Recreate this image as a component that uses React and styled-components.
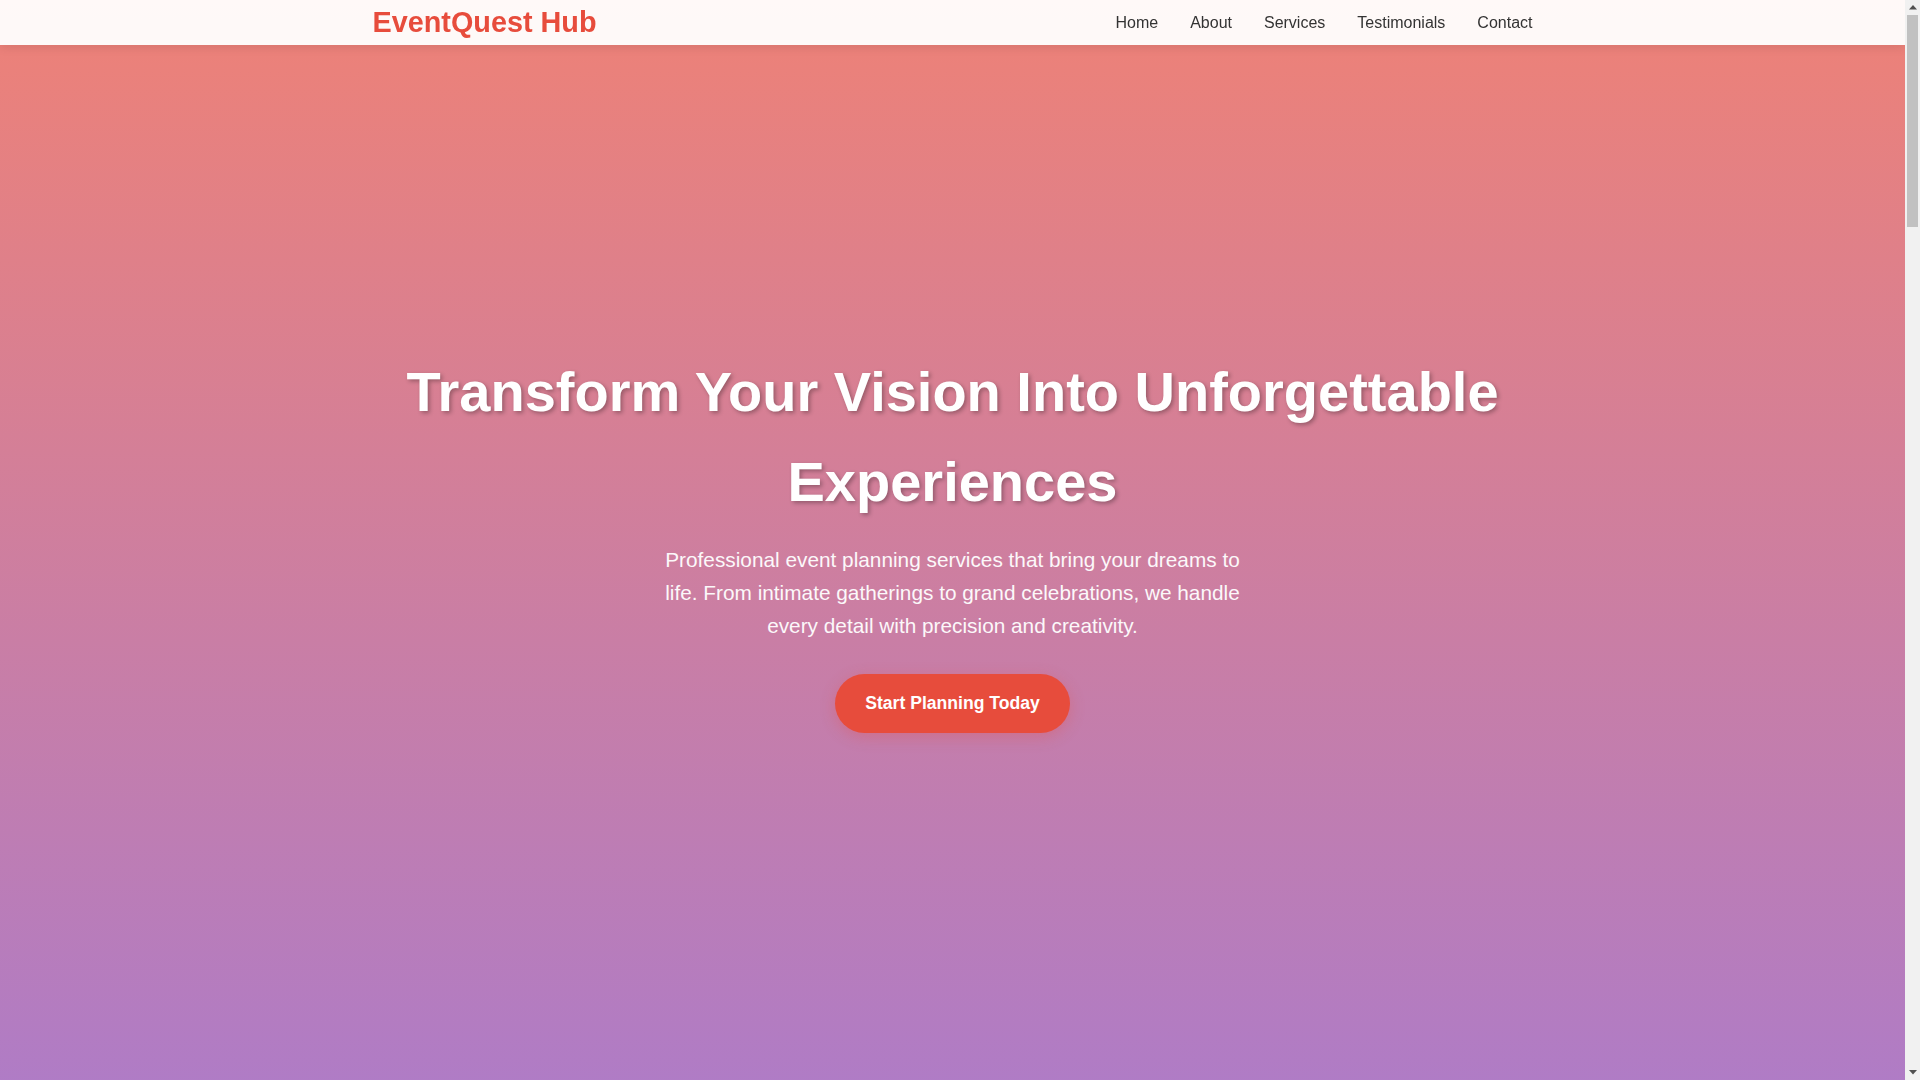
import React from "react";
import styled, { createGlobalStyle } from "styled-components";

const GlobalStyle = createGlobalStyle`
  * { margin: 0; padding: 0; box-sizing: border-box; }
  html { scroll-behavior: smooth; }
  body {
    font-family: "Liberation Sans", Arial, sans-serif;
    line-height: 1.6;
    color: #333;
    background: #fff;
    margin-right: 15px;
  }
`;

/* classic browser scrollbar look, drawn on the right edge */
const ScrollRail = styled.div`
  position: fixed;
  top: 0;
  right: 0;
  width: 15px;
  height: 100vh;
  z-index: 200;
  background: #f1f1f1;
  display: flex;
  flex-direction: column;
  align-items: center;
`;

const RailButton = styled.div`
  width: 15px;
  height: 15px;
  flex: none;
  display: flex;
  align-items: center;
  justify-content: center;
`;

const RailTrack = styled.div`
  flex: 1;
  width: 15px;
  padding: 0 2px;
`;

const RailThumb = styled.div`
  height: 212px;
  background: #c1c1c1;
`;

const Header = styled.header`
  position: fixed;
  top: 0;
  left: 0;
  right: 15px;
  z-index: 100;
  background: rgba(255, 255, 255, 0.95);
  box-shadow: 0 2px 10px rgba(0, 0, 0, 0.1);
`;

const Container = styled.div`
  max-width: 1200px;
  margin: 0 auto;
  padding: 0 20px;
`;

const NavBar = styled(Container)`
  height: 45px;
  display: flex;
  align-items: center;
  justify-content: space-between;
`;

const Logo = styled.a`
  font-size: 1.8rem;
  font-weight: bold;
  color: #e74c3c;
  text-decoration: none;
`;

const NavLinks = styled.ul`
  display: flex;
  list-style: none;
  gap: 2rem;
`;

const NavLink = styled.a`
  color: #333;
  text-decoration: none;
  font-size: 16px;
`;

const Hero = styled.section`
  height: 100vh;
  display: flex;
  align-items: center;
  justify-content: center;
  text-align: center;
  color: #fff;
  background: linear-gradient(rgba(231, 76, 60, 0.7), rgba(142, 68, 173, 0.7));
`;

const HeroInner = styled(Container)`
  display: flex;
  flex-direction: column;
  align-items: center;
`;

const Title = styled.h1`
  font-size: 3.5rem;
  font-weight: bold;
  line-height: 1.6;
  margin-bottom: 1rem;
  text-shadow: 2px 2px 4px rgba(0, 0, 0, 0.3);
`;

const Lead = styled.p`
  font-size: 1.3rem;
  max-width: 600px;
  margin: 0 auto 2rem;
  opacity: 0.95;
`;

const CTA = styled.a`
  display: inline-block;
  background: #e74c3c;
  color: #fff;
  padding: 15px 30px;
  border-radius: 50px;
  font-size: 1.1rem;
  font-weight: bold;
  text-decoration: none;
  box-shadow: 0 4px 15px rgba(231, 76, 60, 0.3);
`;

const Section = styled.section`
  min-height: 1000px;
  padding: 100px 0;
  background: ${(p) => (p.$alt ? "#f8f9fa" : "#fff")};
`;

const SectionTitle = styled.h2`
  text-align: center;
  font-size: 2.5rem;
  color: #2c3e50;
  margin-bottom: 3rem;
`;

const Grid = styled.div`
  display: grid;
  grid-template-columns: repeat(3, 1fr);
  gap: 2rem;
`;

const Card = styled.div`
  background: #fff;
  border-radius: 10px;
  padding: 2rem;
  min-height: 380px;
  box-shadow: 0 5px 15px rgba(0, 0, 0, 0.08);
`;

const CardTitle = styled.h3`
  font-size: 1.4rem;
  color: #e74c3c;
  margin-bottom: 1rem;
`;

const Text = styled.p`
  color: ${(p) => (p.$light ? "#fff" : "#555")};
`;

const Footer = styled.footer`
  background: #2c3e50;
  color: #fff;
  text-align: center;
  padding: 2rem 0;
`;

const links = ["Home", "About", "Services", "Testimonials", "Contact"];

const services = [
  ["Weddings", "Elegant ceremonies and receptions designed around your story."],
  ["Corporate Events", "Conferences, launches and retreats that impress every guest."],
  ["Birthday Parties", "Memorable celebrations for every age and every theme."],
  ["Anniversaries", "Mark your milestones with thoughtful, personal touches."],
  ["Galas & Fundraisers", "Polished evenings that inspire giving and connection."],
  ["Private Dinners", "Intimate gatherings with curated menus and decor."],
];

const testimonials = [
  ["Sarah M.", "EventQuest Hub made our wedding day absolutely perfect."],
  ["James T.", "Our corporate retreat ran flawlessly from start to finish."],
  ["Priya K.", "Every detail of the party was handled with care and creativity."],
];

function Arrow({ down }) {
  return (
    <svg width="8" height="5" viewBox="0 0 8 5" aria-hidden="true">
      <path d={down ? "M0 0 L8 0 L4 4.5 Z" : "M0 4.5 L8 4.5 L4 0 Z"} fill="#505050" />
    </svg>
  );
}

export default function App() {
  return (
    <>
      <GlobalStyle />
      <ScrollRail aria-hidden="true">
        <RailButton>
          <Arrow />
        </RailButton>
        <RailTrack>
          <RailThumb />
        </RailTrack>
        <RailButton>
          <Arrow down />
        </RailButton>
      </ScrollRail>

      <Header>
        <NavBar as="nav">
          <Logo href="#home">EventQuest Hub</Logo>
          <NavLinks>
            {links.map((l) => (
              <li key={l}>
                <NavLink href={`#${l.toLowerCase()}`}>{l}</NavLink>
              </li>
            ))}
          </NavLinks>
        </NavBar>
      </Header>

      <Hero id="home">
        <HeroInner>
          <Title>Transform Your Vision Into Unforgettable Experiences</Title>
          <Lead>
            Professional event planning services that bring your dreams to life. From intimate
            gatherings to grand celebrations, we handle every detail with precision and creativity.
          </Lead>
          <CTA href="#contact">Start Planning Today</CTA>
        </HeroInner>
      </Hero>

      <Section id="about">
        <Container>
          <SectionTitle>About Us</SectionTitle>
          <Grid>
            <Card>
              <CardTitle>Our Story</CardTitle>
              <Text>Founded by passionate planners, we have crafted hundreds of events.</Text>
            </Card>
            <Card>
              <CardTitle>Our Mission</CardTitle>
              <Text>To turn every occasion into an experience worth remembering.</Text>
            </Card>
            <Card>
              <CardTitle>Our Team</CardTitle>
              <Text>Designers, coordinators and vendors working as one.</Text>
            </Card>
          </Grid>
        </Container>
      </Section>

      <Section id="services" $alt>
        <Container>
          <SectionTitle>Our Services</SectionTitle>
          <Grid>
            {services.map(([t, d]) => (
              <Card key={t}>
                <CardTitle>{t}</CardTitle>
                <Text>{d}</Text>
              </Card>
            ))}
          </Grid>
        </Container>
      </Section>

      <Section id="testimonials">
        <Container>
          <SectionTitle>What Our Clients Say</SectionTitle>
          <Grid>
            {testimonials.map(([n, q]) => (
              <Card key={n}>
                <Text>"{q}"</Text>
                <CardTitle>{n}</CardTitle>
              </Card>
            ))}
          </Grid>
        </Container>
      </Section>

      <Section id="contact" $alt>
        <Container>
          <SectionTitle>Get In Touch</SectionTitle>
          <Grid>
            <Card>
              <CardTitle>Phone</CardTitle>
              <Text>(555) 123-4567</Text>
            </Card>
            <Card>
              <CardTitle>Email</CardTitle>
              <Text>hello@eventquesthub.com</Text>
            </Card>
            <Card>
              <CardTitle>Office</CardTitle>
              <Text>123 Celebration Ave, Suite 100</Text>
            </Card>
          </Grid>
        </Container>
      </Section>

      <Footer>
        <Container>
          <Text $light>© 2024 EventQuest Hub. All rights reserved.</Text>
        </Container>
      </Footer>
    </>
  );
}
